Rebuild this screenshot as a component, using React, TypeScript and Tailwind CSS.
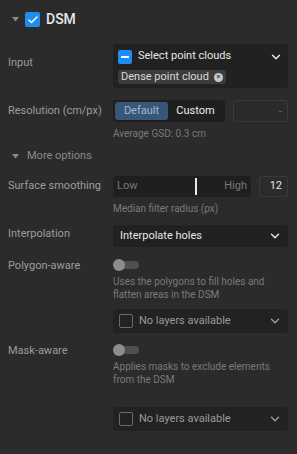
import { Check, ChevronDown } from 'lucide-react'

function Caret() {
  return (
    <svg width="7" height="5" viewBox="0 0 7 5" className="shrink-0">
      <path d="M0 0 L7 0 L3.5 4.5 Z" fill="#8a8a8a" />
    </svg>
  )
}

function Row({ label, pt, children }: { label: string; pt: string; children: React.ReactNode }) {
  return (
    <div className="flex items-start">
      <div className={`w-[105px] shrink-0 whitespace-nowrap text-[11px] leading-4 text-[#9c9c9c] ${pt}`}>{label}</div>
      <div className="flex-1 min-w-0">{children}</div>
    </div>
  )
}

function Toggle() {
  return (
    <div className="relative h-[12px] w-[26px]">
      <div className="absolute left-[4px] top-[2px] h-[8px] w-[22px] rounded-full bg-[#4f4f4f]" />
      <div className="absolute left-0 top-0 h-[12px] w-[12px] rounded-full bg-[#8d8d8d]" />
    </div>
  )
}

function LayerSelect() {
  return (
    <div className="flex h-[24px] items-center rounded-[3px] bg-[#222222] pl-[6px] pr-[6px]">
      <div className="h-[14px] w-[14px] rounded-[2px] border border-[#6a6a6a]" />
      <span className="ml-[6px] flex-1 text-[11px] text-[#9a9a9a]">No layers available</span>
      <ChevronDown size={14} strokeWidth={2.5} color="#9a9a9a" />
    </div>
  )
}

export default function App() {
  return (
    <div
      className="h-[454px] w-[297px] bg-[#2b2b2b] pl-[8px] pr-[9px] pt-[12px] text-[#e6e6e6]"
      style={{ fontFamily: 'Roboto, "Noto Sans", sans-serif' }}
    >
      {/* header */}
      <div className="flex h-[15px] items-center">
        <div className="ml-[4px] mr-[6px]">
          <Caret />
        </div>
        <div className="flex h-[15px] w-[15px] items-center justify-center rounded-[2px] bg-[#1d8ef0]">
          <Check size={12} strokeWidth={3} color="#fff" />
        </div>
        <span className="ml-[6px] text-[14px] font-medium text-[#e8e8e8]">DSM</span>
      </div>

      <div className="mt-[17px]">
        <Row label="Input" pt="pt-[11px]">
          <div className="h-[44px] rounded-[3px] bg-[#212121] px-[5px] pt-[6px]">
            <div className="flex h-[13px] items-center">
              <div className="flex h-[14px] w-[14px] items-center justify-center rounded-[2px] bg-[#1d8ef0]">
                <div className="h-[2px] w-[8px] bg-white" />
              </div>
              <span className="ml-[6px] flex-1 text-[11px] text-[#e6e6e6]">Select point clouds</span>
              <ChevronDown size={14} strokeWidth={2.5} color="#e6e6e6" />
            </div>
            <div className="mt-[6px] inline-flex h-[14px] items-center rounded-[3px] bg-[#3c3c3c] px-[3px]">
              <span className="text-[11px] text-[#d8d8d8]">Dense point cloud</span>
              <div className="ml-[5px] flex h-[9px] w-[9px] items-center justify-center rounded-full bg-[#c8c8c8] text-[7px] font-bold leading-none text-[#3c3c3c]">
                ×
              </div>
            </div>
          </div>
        </Row>
      </div>

      <div className="mt-[12px]">
        <Row label="Resolution (cm/px)" pt="pt-[3px]">
          <div className="flex items-center">
            <div className="flex h-[22px] w-[112px] items-center rounded-[3px] bg-[#1f1f1f] p-[2px]">
              <div className="flex h-[18px] w-[53px] items-center justify-center rounded-[3px] bg-[#385677] text-[11px] text-[#9fbad6]">
                Default
              </div>
              <div className="flex h-[18px] flex-1 items-center justify-center text-[11px] text-[#eeeeee]">Custom</div>
            </div>
            <div className="ml-[8px] flex h-[22px] flex-1 items-center justify-end rounded-[3px] border border-[#3a3a3a] pr-[5px]">
              <div className="h-[1px] w-[3px] bg-[#5a5a5a]" />
            </div>
          </div>
          <div className="mt-[4px] text-[10px] leading-4 text-[#7a7a7a]">Average GSD: 0.3 cm</div>
        </Row>
      </div>

      <div className="mt-[8px] flex h-[13px] items-center">
        <div className="ml-[4px] mr-[8px]">
          <Caret />
        </div>
        <span className="text-[11px] text-[#8a8a8a]">More options</span>
      </div>

      <div className="mt-[13px]">
        <Row label="Surface smoothing" pt="pt-[2px]">
          <div className="flex items-center">
            <div className="relative flex h-[21px] w-[138px] items-center justify-between rounded-[3px] bg-[#1f1f1f] px-[4px] text-[11px] text-[#777777]">
              <span>Low</span>
              <span>High</span>
              <div className="absolute left-[82px] top-[2px] h-[17px] w-[2px] bg-[#e8e8e8]" />
            </div>
            <div className="ml-[8px] flex h-[21px] flex-1 items-center justify-end rounded-[3px] border border-[#3a3a3a] pr-[5px] text-[11px] text-[#e6e6e6]">
              12
            </div>
          </div>
          <div className="mt-[4px] text-[10px] leading-4 text-[#7a7a7a]">Median filter radius (px)</div>
        </Row>
      </div>

      <div className="mt-[8px]">
        <Row label="Interpolation" pt="pt-[1px]">
          <div className="flex h-[22px] items-center rounded-[3px] bg-[#212121] pl-[7px] pr-[6px]">
            <span className="flex-1 text-[11px] text-[#e6e6e6]">Interpolate holes</span>
            <ChevronDown size={14} strokeWidth={2.5} color="#e6e6e6" />
          </div>
        </Row>
      </div>

      <div className="mt-[10px]">
        <Row label="Polygon-aware" pt="pt-[1px]">
          <div className="pt-[2px]">
            <Toggle />
          </div>
          <div className="mt-[4px] text-[10px] leading-[13px] text-[#7a7a7a]">
            Uses the polygons to fill holes and flatten areas in the DSM
          </div>
          <div className="mt-[8px]">
            <LayerSelect />
          </div>
        </Row>
      </div>

      <div className="mt-[9px]">
        <Row label="Mask-aware" pt="pt-[1px]">
          <div className="pt-[2px]">
            <Toggle />
          </div>
          <div className="mt-[4px] text-[10px] leading-[13px] text-[#7a7a7a]">
            Applies masks to exclude elements from the DSM
          </div>
          <div className="mt-[21px]">
            <LayerSelect />
          </div>
        </Row>
      </div>
    </div>
  )
}
